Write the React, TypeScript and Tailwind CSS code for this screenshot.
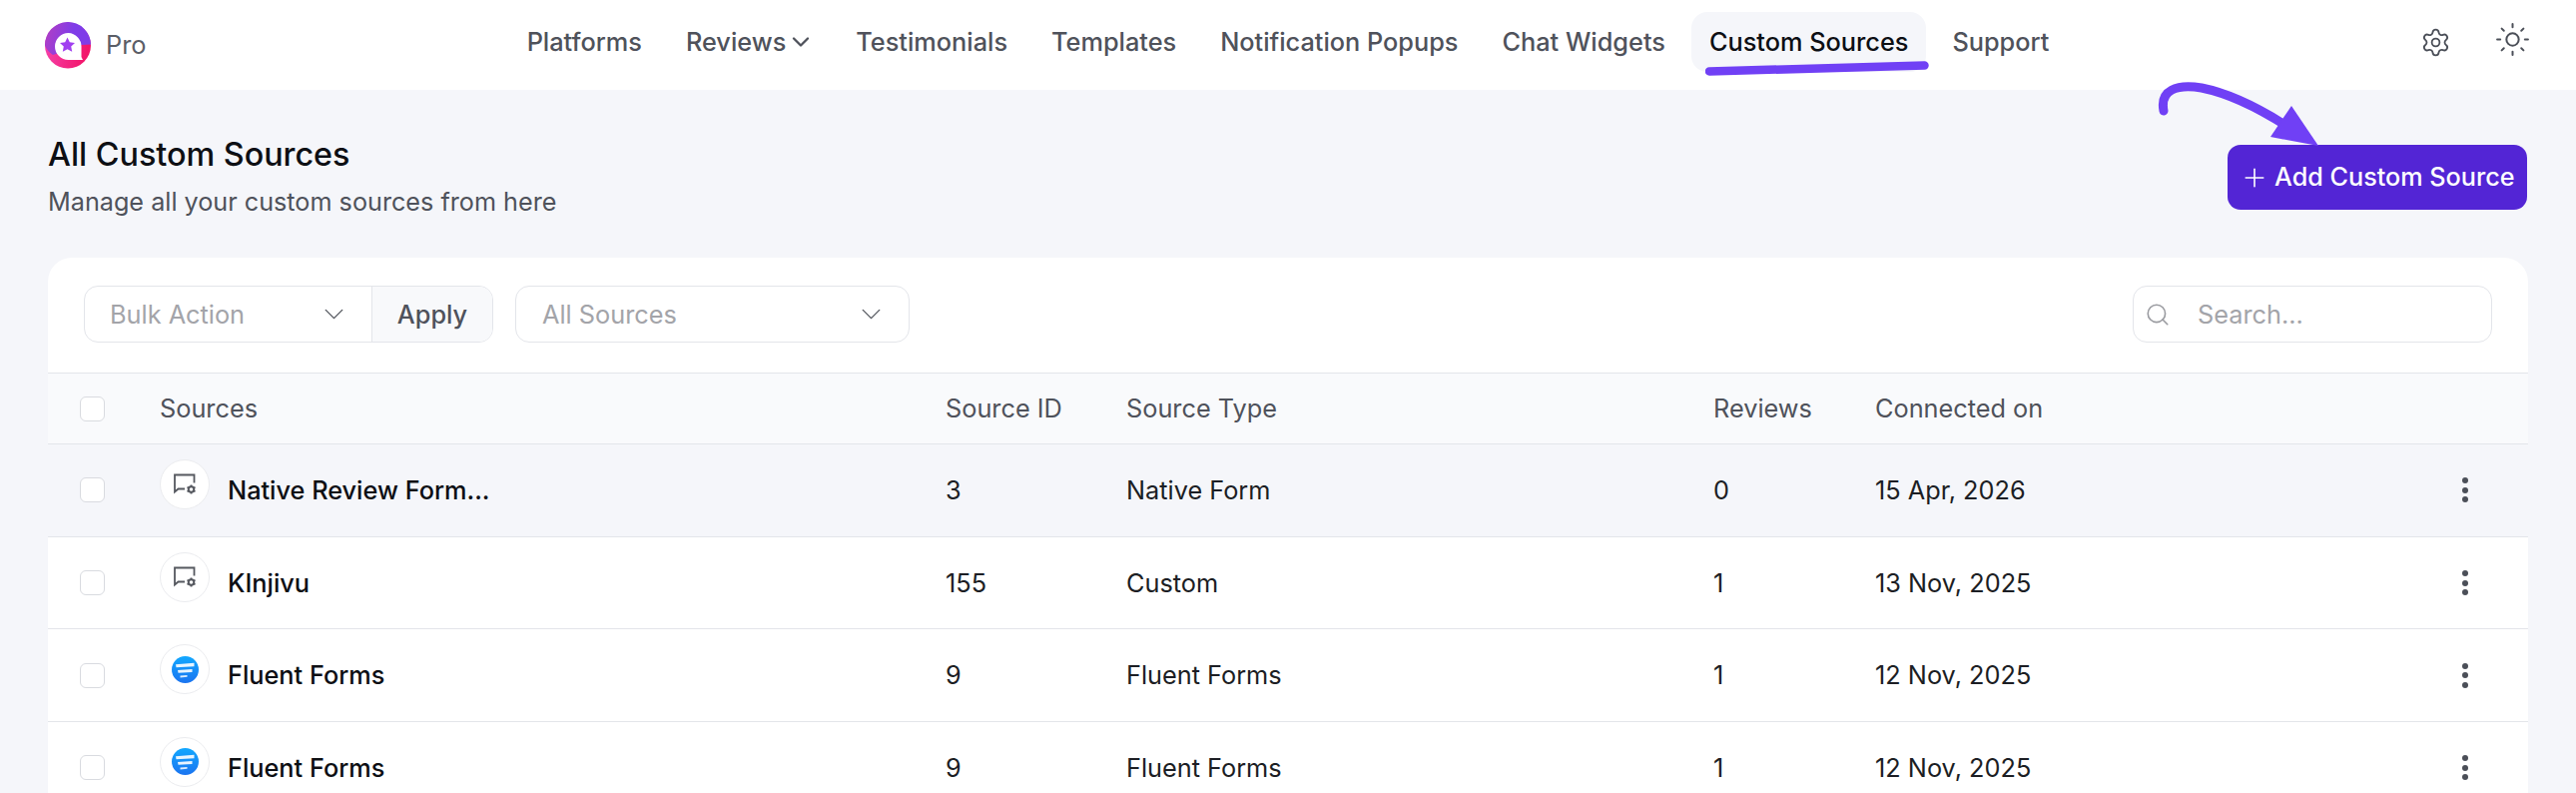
import { ChevronDown, Plus, Search, Settings, Sun } from 'lucide-react'

const navItems = ['Platforms', 'Reviews', 'Testimonials', 'Templates', 'Notification Popups', 'Chat Widgets', 'Custom Sources', 'Support']

const rows = [
  { name: 'Native Review Form...', id: '3', type: 'Native Form', reviews: '0', date: '15 Apr, 2026', icon: 'custom', hover: true },
  { name: 'KInjivu', id: '155', type: 'Custom', reviews: '1', date: '13 Nov, 2025', icon: 'custom', hover: false },
  { name: 'Fluent Forms', id: '9', type: 'Fluent Forms', reviews: '1', date: '12 Nov, 2025', icon: 'fluent', hover: false },
  { name: 'Fluent Forms', id: '9', type: 'Fluent Forms', reviews: '1', date: '12 Nov, 2025', icon: 'fluent', hover: false },
]

function Logo() {
  return (
    <svg width="46" height="47" viewBox="0 0 46 47">
      <defs>
        <linearGradient id="logoTop" x1="0" y1="0.2" x2="1" y2="0.4">
          <stop offset="0" stopColor="#b23fc4" />
          <stop offset="0.6" stopColor="#7f3ce8" />
        </linearGradient>
        <linearGradient id="logoBottom" x1="0" y1="0" x2="1" y2="0.2">
          <stop offset="0" stopColor="#f646b0" />
          <stop offset="1" stopColor="#f2156a" />
        </linearGradient>
      </defs>
      <circle cx="23" cy="23.5" r="23" fill="url(#logoBottom)" />
      <path d="M0 23.5A23 23 0 0 1 46 22.5L36 23 8 33Q2 29 0 23.5Z" fill="url(#logoTop)" />
      <path d="M23.500 11A13.500 13.500 0 1 0 23.500 38L38 38 36.500 35V24.500A13.500 13.500 0 0 0 23.500 11Z" fill="#fff" />
      <path d="M22.500 15.500l2.300 4.800 5.200 .7-3.800 3.600 1 5.200-4.700-2.600-4.700 2.600 1-5.200-3.800-3.600 5.200-.7Z" fill="#a13ff0" />
    </svg>
  )
}

function CustomIcon() {
  return (
    <svg width="24" height="22" viewBox="0 0 24 22" fill="none" stroke="#55585f" strokeWidth="1.800">
      <path d="M12 15.500H5.500L2 18.500V1.500H21.500V9.500" />
      <circle cx="18.500" cy="16" r="2.800" strokeWidth="2" />
      <path d="M18.500 11.500V13M18.500 19V20.500M14.500 13.700L16 14.500M21 17.500L22.500 18.300M14.500 18.300L16 17.500M21 14.500L22.500 13.700" />
    </svg>
  )
}

function FluentIcon() {
  return (
    <svg width="27" height="27" viewBox="0 0 27 27">
      <defs>
        <linearGradient id="fluentBg" x1="0" y1="0" x2="0" y2="1">
          <stop offset="0" stopColor="#12a8ff" />
          <stop offset="1" stopColor="#1b74f0" />
        </linearGradient>
      </defs>
      <circle cx="13.500" cy="13.500" r="13.500" fill="url(#fluentBg)" />
      <path d="M4 8.200L22.500 6.800V10.200L4.500 11.200Z" fill="#fff" fillOpacity="0.9" />
      <path d="M6 14L20.500 13V16L6.500 16.800Z" fill="#fff" fillOpacity="0.9" />
      <path d="M8.500 19.500L15.500 19V20.800L8.500 21.500Z" fill="#fff" fillOpacity="0.85" />
    </svg>
  )
}

function Checkbox() {
  return <div className="w-[25px] h-[25px] rounded-[6px] border border-[#d9dbe0] bg-white" />
}

export default function App() {
  return (
    <div className="relative h-[794px] overflow-hidden bg-[#f5f6fa] font-['Inter',sans-serif] text-[#4f525b]">
      {/* top nav */}
      <header className="grid grid-cols-[1fr_auto_1fr] items-center h-[90px] bg-white pl-[45px] pr-[45px] pb-[6px]">
        <div className="flex items-center gap-[15px] pt-[6px]">
          <Logo />
          <span className="text-[25.300px] font-normal text-[#5b5e67]">Pro</span>
        </div>
        <nav className="flex items-center gap-2">
          {navItems.map((item) => (
            <div
              key={item}
              className={`relative flex items-center h-[60px] px-[18px] rounded-[16px] text-[25.300px] font-medium ${
                item === 'Custom Sources' ? 'bg-[#f5f6fa] text-[#0d0f14]' : ''
              }`}
            >
              {item}
              {item === 'Reviews' && <ChevronDown size={28} strokeWidth={2} className="ml-[1px] -mr-[3px]" />}
              {item === 'Custom Sources' && (
                <svg className="absolute left-[14px] top-[48px]" width="224" height="16" viewBox="0 0 224 16">
                  <path d="M4 11.500L219.500 5.500" stroke="#7040f5" strokeWidth="8.500" strokeLinecap="round" />
                </svg>
              )}
            </div>
          ))}
        </nav>
        <div className="flex items-center justify-end gap-[43px] text-[#4b4f58]">
          <Settings size={31} strokeWidth={1.400} />
          <Sun size={37} strokeWidth={1.300} className="-translate-y-[3px]" />
        </div>
      </header>

      {/* page heading */}
      <div className="flex justify-between px-[48px] pt-[45px]">
        <div>
          <h1 className="text-[32.300px] leading-[40px] font-medium text-[#0d0f14]">All Custom Sources</h1>
          <p className="mt-[9px] text-[25.200px] leading-[36px] text-[#4f525b]">Manage all your custom sources from here</p>
        </div>
        <button className="flex items-center gap-[5px] self-start mt-[10px] mr-[1px] h-[65px] w-[300px] pl-[12px] pt-[1px] rounded-[13px] bg-[#5325d5] text-white text-[25.200px] font-medium">
          <Plus size={30} strokeWidth={1.300} />
          Add Custom Source
        </button>
      </div>

      {/* arrow pointing at the button */}
      <svg className="absolute left-[2150px] top-[70px]" width="200" height="90" viewBox="0 0 200 90">
        <path d="M17 41C13 20 30 14 55 18C85 24 115 40 140 56" fill="none" stroke="#7040f5" strokeWidth="9" strokeLinecap="round" />
        <path d="M145 36L172 76L124 67Z" fill="#7040f5" />
      </svg>

      {/* table card */}
      <section className="mx-[48px] mt-[38px] rounded-t-[24px] bg-white">
        <div className="flex items-center justify-between h-[115px] pl-[36px] pr-[36px] pb-[2px]">
          <div className="flex items-center gap-[22px]">
            <div className="flex h-[57px] w-[410px] rounded-[14px] border border-[#e3e5ea] overflow-hidden">
              <div className="flex flex-1 items-center justify-between pl-[25px] pr-[21px] text-[25.300px] text-[#a3a4a9]">
                Bulk Action
                <ChevronDown size={33} strokeWidth={1} className="text-[#55585f]" />
              </div>
              <div className="flex w-[121px] items-center justify-center border-l border-[#e3e5ea] bg-[#f8f9fb] text-[25.300px] font-medium">
                Apply
              </div>
            </div>
            <div className="flex h-[57px] w-[395px] items-center justify-between pl-[26px] pr-[21px] rounded-[14px] border border-[#e3e5ea] text-[25.300px] text-[#a3a4a9]">
              All Sources
              <ChevronDown size={33} strokeWidth={1} className="text-[#55585f]" />
            </div>
          </div>
          <div className="flex h-[57px] w-[360px] items-center gap-[27px] pl-[11px] rounded-[14px] border border-[#e3e5ea] text-[25.300px] text-[#a3a4a9]">
            <Search size={26} strokeWidth={1.500} className="text-[#9a9ba0]" />
            Search...
          </div>
        </div>

        {/* column headers */}
        <div className="grid grid-cols-[80px_787px_181px_588px_162px_1fr] items-center h-[72px] pl-[32px] border-y border-[#e3e5ea] bg-[#f9fafc] text-[25.300px]">
          <Checkbox />
          <div>Sources</div>
          <div>Source ID</div>
          <div>Source Type</div>
          <div>Reviews</div>
          <div>Connected on</div>
        </div>

        {rows.map((row, i) => (
          <div
            key={i}
            className={`grid grid-cols-[80px_787px_181px_588px_162px_1fr] items-center h-[92.700px] pl-[32px] border-b border-[#e3e5ea] text-[25.300px] text-[#1c1e24] ${
              row.hover ? 'bg-[#f5f6fa]' : ''
            }`}
          >
            <Checkbox />
            <div className="flex items-center gap-[18px]">
              <div className="flex h-[50px] w-[50px] -translate-y-[6px] items-center justify-center rounded-full border border-[#ebecef] bg-white">
                {row.icon === 'custom' ? <CustomIcon /> : <FluentIcon />}
              </div>
              <span className="font-medium text-[#0d0f14]">{row.name}</span>
            </div>
            <div>{row.id}</div>
            <div>{row.type}</div>
            <div>{row.reviews}</div>
            <div className="flex items-center justify-between pr-[60px]">
              {row.date}
              <div className="flex flex-col gap-[3.500px]">
                <span className="h-[6px] w-[6px] rounded-full bg-[#4b4f58]" />
                <span className="h-[6px] w-[6px] rounded-full bg-[#4b4f58]" />
                <span className="h-[6px] w-[6px] rounded-full bg-[#4b4f58]" />
              </div>
            </div>
          </div>
        ))}
      </section>
    </div>
  )
}
